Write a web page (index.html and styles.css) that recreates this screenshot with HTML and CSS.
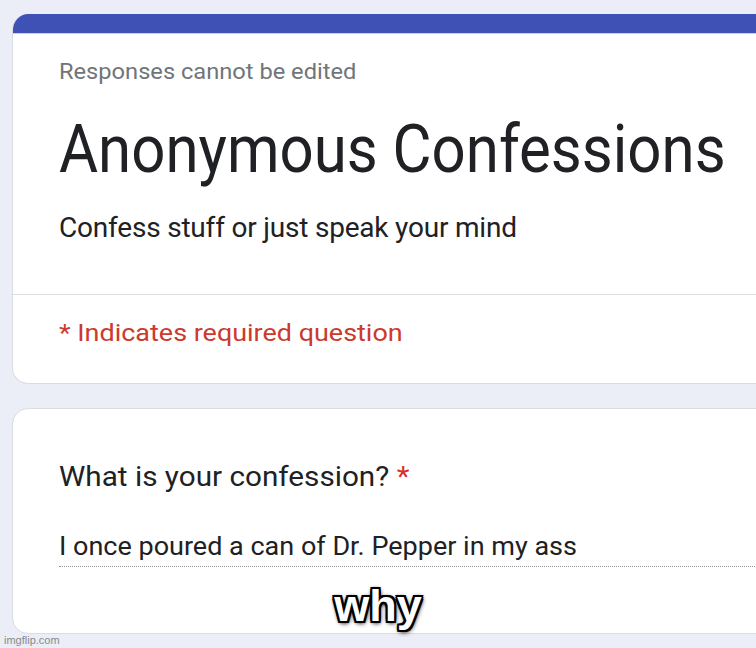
FILE: index.html
```html
<!DOCTYPE html>
<html>
<head>
<meta charset="utf-8">
<link rel="stylesheet" href="styles.css">
</head>
<body>
<div class="page">
  <div class="card header-card">
    <div class="accent"></div>
    <div class="header-body">
      <div class="notice"><span class="wide notice-text">Responses cannot be edited</span></div>
      <h1 class="title">Anonymous Confessions</h1>
      <div class="desc">Confess stuff or just speak your mind</div>
    </div>
    <div class="required-row">
      <span class="wide required">* Indicates required question</span>
    </div>
  </div>
  <div class="card question-card">
    <div class="question"><span class="wide q-text">What is your confession? <span class="star">*</span></span></div>
    <div class="answer"><span class="wide a-text">I once poured a can of Dr. Pepper in my ass</span></div>
  </div>
</div>
<div class="caption">why</div>
<div class="watermark">imgflip.com</div>
</body>
</html>
```
FILE: styles.css
```css
html, body {
  margin: 0;
  padding: 0;
  width: 756px;
  height: 648px;
  overflow: hidden;
  background: #ebedf7;
  font-family: Roboto, "Liberation Sans", sans-serif;
}
.page {
  padding: 14px 0 0 12px;
  width: 820px;
  display: flex;
  flex-direction: column;
  gap: 24px;
}
.card {
  background: #fff;
  border: 1px solid #dadce0;
  border-radius: 16px;
  overflow: hidden;
}
.header-card {
  border-top: none;
}
.accent {
  height: 19px;
  background: #3f51b5;
  border-bottom: 1px solid #c9cff0;
}
.header-body {
  padding: 26px 0 50px 46px;
  border-bottom: 1px solid #dadce0;
}
.wide {
  display: inline-block;
  vertical-align: top;
  white-space: nowrap;
  transform-origin: left center;
}
.notice {
  display: flex;
  font-size: 21.5px;
  line-height: 24px;
  color: #70757a;
}
.notice-text {
  transform: scaleX(1.1);
}
.title {
  margin: 30px 0 0;
  font-weight: 400;
  font-size: 67px;
  line-height: 70px;
  color: #202124;
  white-space: nowrap;
  transform: scaleX(0.895);
  transform-origin: left center;
}
.desc {
  margin-top: 28px;
  font-size: 28px;
  line-height: 32px;
  letter-spacing: -0.2px;
  color: #202124;
}
.required-row {
  display: flex;
  padding: 23px 0 35px 46px;
}
.required {
  font-size: 24.5px;
  line-height: 30px;
  color: #cc3a2d;
  transform: scaleX(1.1);
}
.question-card {
  box-sizing: border-box;
  height: 226px;
  padding: 0 0 0 46px;
}
.question {
  display: flex;
  margin-top: 52px;
  font-size: 27px;
  line-height: 32px;
  color: #202124;
}
.q-text {
  transform: scaleX(1.1);
}
.star {
  color: #d93025;
}
.answer {
  display: flex;
  margin-top: 39px;
  font-size: 25px;
  line-height: 30px;
  color: #202124;
  border-bottom: 1px dotted #8f9296;
  padding-bottom: 4px;
}
.a-text {
  transform: scaleX(1.08);
}
.caption {
  position: absolute;
  left: 0;
  width: 756px;
  top: 581px;
  text-align: center;
  font-family: "Liberation Sans", Arial, sans-serif;
  font-weight: 700;
  font-size: 45px;
  line-height: 50px;
  color: #fff;
  text-shadow: -2px 0 0 #000, 2px 0 0 #000, 0 -2px 0 #000, 0 2px 0 #000, 2px 2px 0 #000, -2px -2px 0 #000, 2px -2px 0 #000, -2px 2px 0 #000, 0 0 4px #000, 1px 2px 5px #000;
}
.watermark {
  position: absolute;
  left: 4px;
  top: 634px;
  font-family: "Liberation Sans", Arial, sans-serif;
  font-size: 11px;
  line-height: 12px;
  color: #8a8a8a;
}
```
